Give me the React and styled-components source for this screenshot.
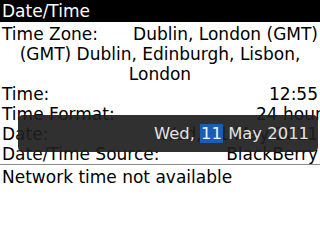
import React from 'react';
import styled, { createGlobalStyle } from 'styled-components';

const GlobalStyle = createGlobalStyle`
  html, body {
    margin: 0;
    padding: 0;
    background: #fff;
  }
  body {
    font-family: "DejaVu Sans", "Liberation Sans", sans-serif;
    font-size: 17px;
    color: #000;
  }
`;

const Screen = styled.div`
  position: relative;
  width: 320px;
  height: 240px;
  overflow: hidden;
  background: #fff;
`;

const TitleBar = styled.div`
  height: 22px;
  line-height: 22px;
  padding: 0 2px;
  background: #000;
  color: #fff;
  margin-bottom: 2px;
`;

const Fields = styled.div`
  display: flex;
  flex-direction: column;
  border-bottom: 1px solid #8a8a8a;
`;

const Row = styled.div`
  display: flex;
  justify-content: space-between;
  height: 20px;
  line-height: 20px;
  padding: 0 2px;
  white-space: nowrap;
`;

const Label = styled.span``;

const Value = styled.span`
  margin-right: ${p => p.$overflow || 0}px;
`;

const ZoneName = styled.div`
  line-height: 20px;
  text-align: center;
  padding: 0 2px;
`;

const Note = styled.div`
  line-height: 20px;
  padding: 2px 2px 0;
`;

const Popup = styled.div`
  position: absolute;
  left: 18px;
  top: 115px;
  width: 300px;
  height: 37px;
  box-sizing: border-box;
  border-radius: 5px;
  background: rgba(30, 30, 30, 0.92);
  color: #e2e2e2;
  font-size: 16.4px;
  line-height: 37px;
  text-align: right;
  padding-right: 9px;
  white-space: nowrap;
`;

const Selected = styled.span`
  background: #1b5db6;
  color: #f2f2f2;
  padding: 0 1px;
`;

const fields = [
  { label: 'Time:', value: '12:55' },
  { label: 'Time Format:', value: '24 hour', overflow: -4 },
  { label: 'Date:', value: 'Wed, 11 May 2011' },
  { label: 'Date/Time Source:', value: 'BlackBerry' },
];

export default function App() {
  return (
    <Screen>
      <GlobalStyle />
      <TitleBar>Date/Time</TitleBar>
      <Fields>
        <Row>
          <Label>Time Zone:</Label>
          <Value>Dublin, London (GMT)</Value>
        </Row>
        <ZoneName>(GMT) Dublin, Edinburgh, Lisbon, London</ZoneName>
        {fields.map(f => (
          <Row key={f.label}>
            <Label>{f.label}</Label>
            <Value $overflow={f.overflow}>{f.value}</Value>
          </Row>
        ))}
      </Fields>
      <Note>Network time not available</Note>
      <Popup>
        Wed, <Selected>11</Selected> May 2011
      </Popup>
    </Screen>
  );
}
